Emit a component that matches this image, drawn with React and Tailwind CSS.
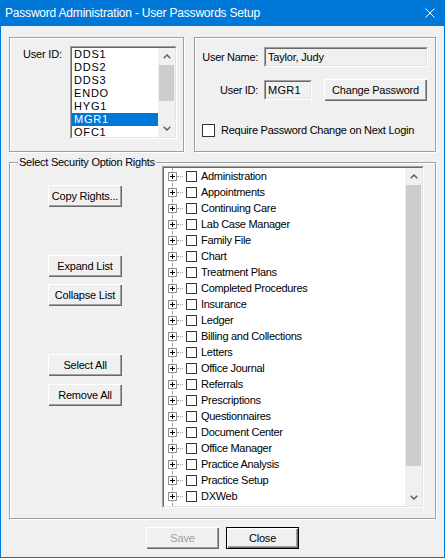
import React from "react";

const FONT = "font-['Liberation_Sans',Arial,sans-serif]";

function Chevron({ up }) {
  return (
    <svg width="8" height="5" viewBox="0 0 8 5">
      <path
        d={up ? "M0.7 4.3 L4 1 L7.3 4.3" : "M0.7 0.7 L4 4 L7.3 0.7"}
        fill="none"
        stroke="#606060"
        strokeWidth="1.5"
      />
    </svg>
  );
}

function ScrollBar({ thumbH }) {
  return (
    <div className="flex w-[17px] flex-col bg-[#f0f0f0]">
      <div className="flex h-[17px] items-center justify-center">
        <Chevron up />
      </div>
      <div className="flex-1">
        <div className="mx-[1px] bg-[#cdcdcd]" style={{ height: thumbH }} />
      </div>
      <div className="flex h-[17px] items-center justify-center">
        <Chevron />
      </div>
    </div>
  );
}

function Sunken({ className = "", innerClass = "", children }) {
  return (
    <div
      className={`border border-t-[#a0a0a0] border-l-[#a0a0a0] border-r-white border-b-white ${className}`}
    >
      <div
        className={`h-full w-full border border-t-[#696969] border-l-[#696969] border-r-[#e3e3e3] border-b-[#e3e3e3] ${innerClass}`}
      >
        {children}
      </div>
    </div>
  );
}

function Btn({ children, className = "", disabled, def }) {
  return (
    <div
      className={`flex h-[22px] items-center justify-center bg-[#f0f0f0] text-[11px] tracking-[-0.2px] ${
        def
          ? "border border-black shadow-[inset_1px_1px_0_#fff,inset_-1px_-1px_0_#696969,inset_-2px_-2px_0_#a0a0a0]"
          : "shadow-[inset_1px_1px_0_#fff,inset_-1px_-1px_0_#696969,inset_-2px_-2px_0_#a0a0a0]"
      } ${disabled ? "text-[#a0a0a0]" : "text-black"} ${className}`}
    >
      {children}
    </div>
  );
}

const groupCls =
  "border border-[#a0a0a0] shadow-[inset_1px_1px_0_#fff,1px_1px_0_#fff]";

const users = ["DDS1", "DDS2", "DDS3", "ENDO", "HYG1", "MGR1", "OFC1"];

const rights = [
  "Administration",
  "Appointments",
  "Continuing Care",
  "Lab Case Manager",
  "Family File",
  "Chart",
  "Treatment Plans",
  "Completed Procedures",
  "Insurance",
  "Ledger",
  "Billing and Collections",
  "Letters",
  "Office Journal",
  "Referrals",
  "Prescriptions",
  "Questionnaires",
  "Document Center",
  "Office Manager",
  "Practice Analysis",
  "Practice Setup",
  "DXWeb",
  "Time Clock",
];

function PlusBox() {
  return (
    <svg width="9" height="9" viewBox="0 0 9 9" shapeRendering="crispEdges" className="relative">
      <rect x="0.5" y="0.5" width="8" height="8" fill="#fff" stroke="#919191" />
      <path d="M2 4.5 H7 M4.5 2 V7" stroke="#000" />
    </svg>
  );
}

function TreeRow({ label }) {
  return (
    <div className="flex h-[16px] shrink-0 items-center pl-[4px]">
      <div className="relative flex h-full w-[9px] items-center">
        <div className="absolute inset-y-0 left-[4px] border-l border-dotted border-[#a0a0a0]" />
        <PlusBox />
      </div>
      <div className="w-[6px] border-t border-dotted border-[#a0a0a0]" />
      <div className="ml-[3px] h-[11px] w-[11px] border border-[#333] bg-white" />
      <div className="ml-[4px] whitespace-nowrap text-[11px] leading-[16px] tracking-[-0.3px] text-black">
        {label}
      </div>
    </div>
  );
}

export default function App() {
  return (
    <div className={`flex h-[558px] w-[445px] flex-col ${FONT} text-black`}>
      {/* Title bar */}
      <div className="flex h-[26px] shrink-0 items-center justify-between bg-[#0078d7] pl-[5px]">
        <span className="text-[12px] tracking-[-0.2px] text-white">
          Password Administration - User Passwords Setup
        </span>
        <svg width="10" height="10" viewBox="0 0 10 10" className="mr-[10px]">
          <path d="M0.5 0.5 L9.5 9.5 M9.5 0.5 L0.5 9.5" stroke="#fff" strokeWidth="1" />
        </svg>
      </div>

      {/* Body */}
      <div className="flex flex-1 flex-col border-x border-b border-[#0078d7] bg-[#f0f0f0] pl-[8px] pt-[11px]">
        {/* Top row */}
        <div className="flex gap-[10px]">
          {/* Left group */}
          <div className={`flex h-[115px] w-[175px] pl-[13px] pt-[8px] ${groupCls}`}>
            <div className="w-[47px] pt-[2px] text-[11px] leading-[13px] tracking-[-0.2px]">
              User ID:
            </div>
            <Sunken className="h-[93px] w-[107px] bg-white" innerClass="flex">
              <div className="flex-1 overflow-hidden">
                {users.map((u) => (
                  <div
                    key={u}
                    className={`h-[13px] pl-[2px] text-[11px] leading-[13px] tracking-[0.8px] ${
                      u === "MGR1" ? "bg-[#0078d7] text-white" : "text-black"
                    }`}
                  >
                    {u}
                  </div>
                ))}
              </div>
              <ScrollBar thumbH={36} />
            </Sunken>
          </div>

          {/* Right group */}
          <div className={`flex h-[115px] w-[242px] flex-col pl-[7px] pt-[9px] ${groupCls}`}>
            <div className="flex h-[20px] items-center">
              <div className="w-[56px] text-right text-[11px] tracking-[-0.3px]">User Name:</div>
              <Sunken className="ml-[6px] h-[20px] w-[164px]" innerClass="flex items-center pl-[2px] text-[11px] tracking-[-0.2px]">
                Taylor, Judy
              </Sunken>
            </div>
            <div className="mt-[12px] flex h-[22px] items-center">
              <div className="w-[56px] text-right text-[11px] tracking-[-0.3px]">User ID:</div>
              <Sunken className="ml-[6px] h-[20px] w-[48px]" innerClass="flex items-center pl-[2px] text-[11px] tracking-[0.3px]">
                MGR1
              </Sunken>
              <Btn className="ml-[12px] w-[103px]">Change Password</Btn>
            </div>
            <div className="mt-[21px] flex items-center">
              <div className="h-[13px] w-[13px] border border-[#333] bg-white" />
              <div className="ml-[6px] text-[11px] tracking-[-0.25px]">
                Require Password Change on Next Login
              </div>
            </div>
          </div>
        </div>

        {/* Bottom group */}
        <div className={`relative mt-[10px] flex h-[357px] w-[427px] pt-[3px] ${groupCls}`}>
          <div className="absolute -top-[7px] left-[8px] bg-[#f0f0f0] px-[1px] text-[11px] leading-[13px] tracking-[-0.25px]">
            Select Security Option Rights
          </div>
          <div className="flex w-[152px] flex-col pl-[38px]">
            <Btn className="mt-[19px] w-[74px]">Copy Rights...</Btn>
            <Btn className="mt-[48px] w-[74px]">Expand List</Btn>
            <Btn className="mt-[7px] w-[74px]">Collapse List</Btn>
            <Btn className="mt-[48px] w-[74px]">Select All</Btn>
            <Btn className="mt-[8px] w-[74px]">Remove All</Btn>
          </div>
          <Sunken className="h-[342px] w-[262px] bg-white" innerClass="flex">
            <div className="flex flex-1 flex-col overflow-hidden">
              {rights.map((r) => (
                <TreeRow key={r} label={r} />
              ))}
            </div>
            <ScrollBar thumbH={281} />
          </Sunken>
        </div>

        {/* Bottom buttons */}
        <div className="mt-[8px] flex justify-center gap-[7px] pr-[8px]">
          <Btn disabled className="w-[73px]">Save</Btn>
          <Btn def className="w-[73px]">Close</Btn>
        </div>
      </div>
    </div>
  );
}
